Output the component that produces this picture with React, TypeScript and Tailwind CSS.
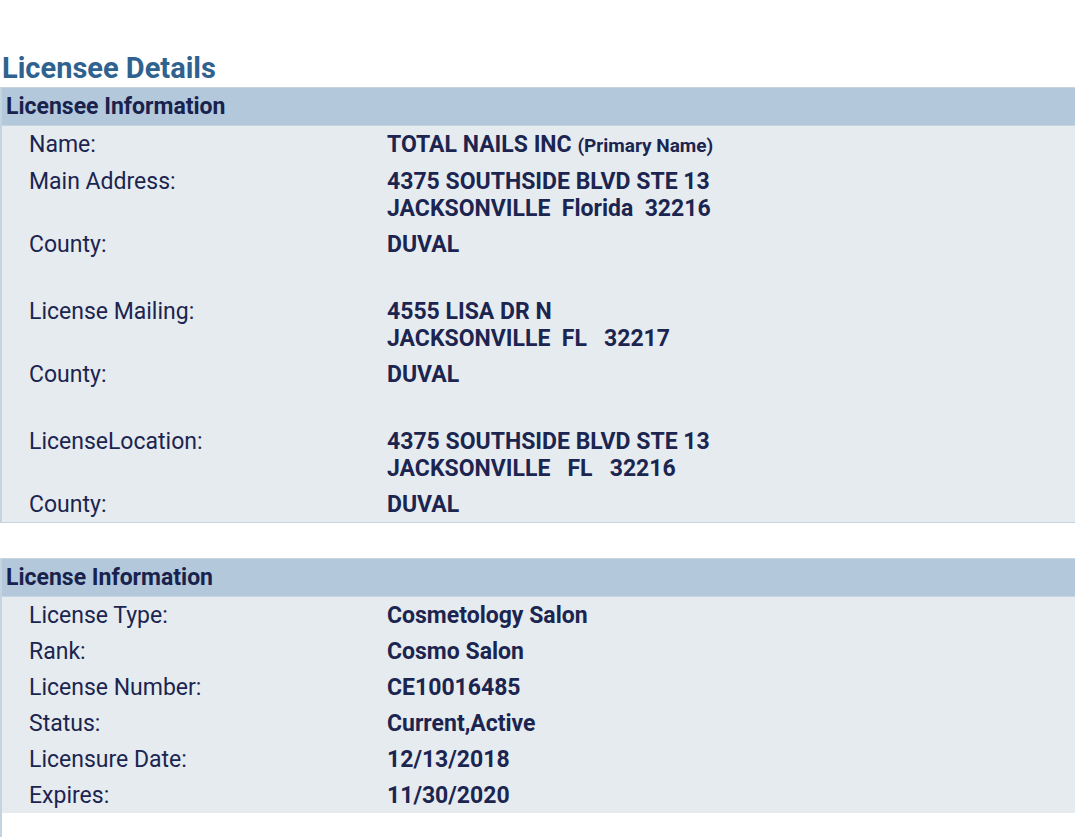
import React from 'react';

type Row = { label: string; value: React.ReactNode[] } | { gap: true };

const licensee: Row[] = [
  {
    label: 'Name:',
    value: [
      <>
        TOTAL NAILS INC <span className="text-[19px]">(Primary Name)</span>
      </>,
    ],
  },
  { label: 'Main Address:', value: ['4375 SOUTHSIDE BLVD STE 13', 'JACKSONVILLE\u00a0 Florida\u00a0 32216'] },
  { label: 'County:', value: ['DUVAL'] },
  { gap: true },
  { label: 'License Mailing:', value: ['4555 LISA DR N', 'JACKSONVILLE\u00a0 FL\u00a0\u00a0 32217'] },
  { label: 'County:', value: ['DUVAL'] },
  { gap: true },
  { label: 'LicenseLocation:', value: ['4375 SOUTHSIDE BLVD STE 13', 'JACKSONVILLE\u00a0\u00a0 FL\u00a0\u00a0 32216'] },
  { label: 'County:', value: ['DUVAL'] },
];

const license: Row[] = [
  { label: 'License Type:', value: ['Cosmetology Salon'] },
  { label: 'Rank:', value: ['Cosmo Salon'] },
  { label: 'License Number:', value: ['CE10016485'] },
  { label: 'Status:', value: ['Current,Active'] },
  { label: 'Licensure Date:', value: ['12/13/2018'] },
  { label: 'Expires:', value: ['11/30/2020'] },
];

const Section = ({ title, rows }: { title: string; rows: Row[] }) => (
  <div className="border-l-2 border-[#c3d3df]">
    <div className="h-[39px] bg-[#b3c8db] border-y border-[#c6d4df] pl-[4px] pt-[2px] flex items-center text-[23px] font-bold text-[#18224d]">
      {title}
    </div>
    <div className="bg-[#e6ebef]">
      {rows.map((r, i) =>
        'gap' in r ? (
          <div key={i} className="h-[31px]" />
        ) : (
          <div key={i} className="flex pt-[5px] pb-[4px] leading-[27px] text-[23px] text-[#1b2550]">
            <div className="w-[385px] pl-[27px] font-normal">{r.label}</div>
            <div className="font-bold">
              {r.value.map((v, j) => (
                <div key={j}>{v}</div>
              ))}
            </div>
          </div>
        )
      )}
    </div>
  </div>
);

export default function App() {
  return (
    <div className="w-[1075px] h-[837px] overflow-hidden bg-white" style={{ fontFamily: 'Roboto, "Liberation Sans", sans-serif' }}>
      <div className="pt-[52px] pb-[3px] pl-[2px] text-[29px] leading-[32px] font-bold text-[#2f628f]">Licensee Details</div>
      <div className="border-b border-[#c6d4df]">
        <Section title="Licensee Information" rows={licensee} />
      </div>
      <div className="h-[35px]" />
      <Section title="License Information" rows={license} />
      <div className="h-[40px] border-l-2 border-[#c3d3df]" />
    </div>
  );
}
